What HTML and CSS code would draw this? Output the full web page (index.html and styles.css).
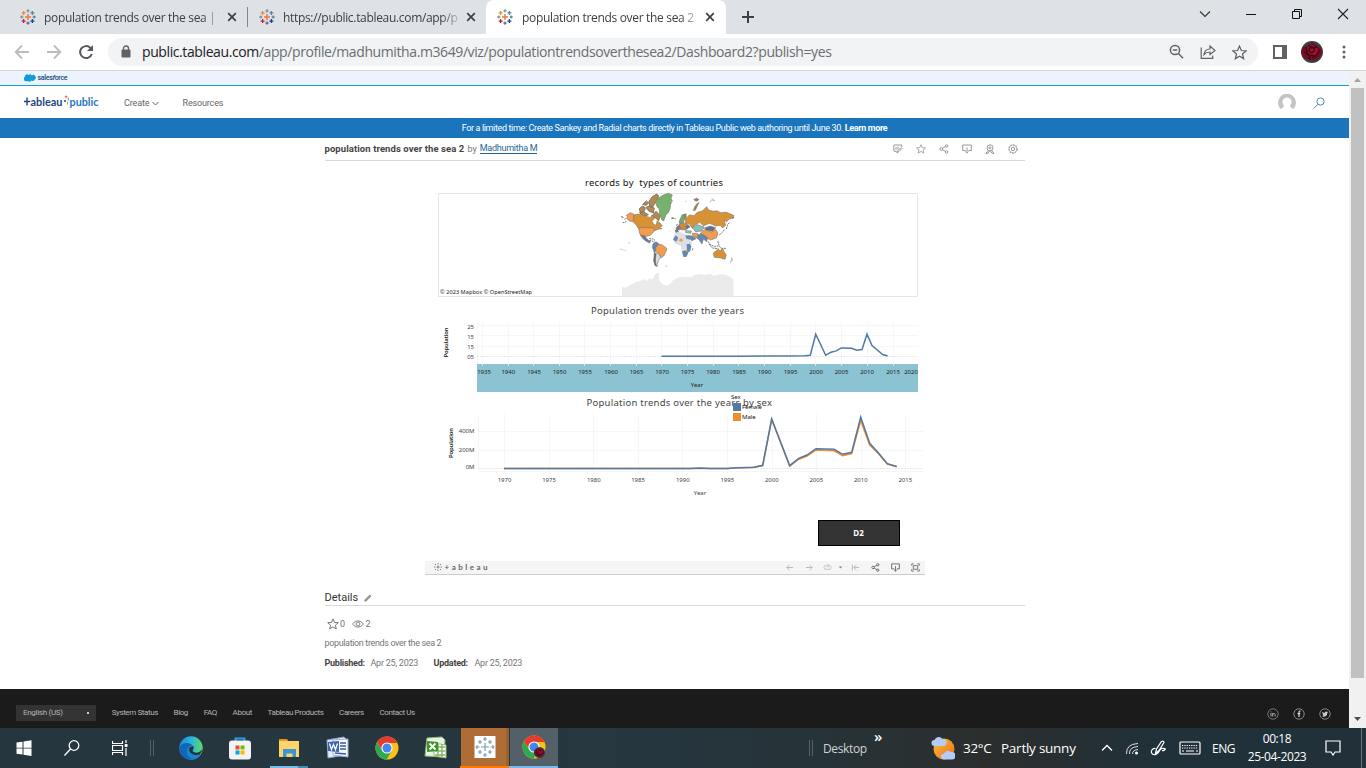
FILE: index.html
```html
<!DOCTYPE html>
<html lang="en">
<head>
<meta charset="utf-8">
<title>population trends over the sea 2</title>
<link rel="stylesheet" href="styles.css">
</head>
<body>
<svg class="defs" width="0" height="0">
  <symbol id="spark" viewBox="0 0 16 16">
    <g fill="none" stroke-width="1.3">
      <path d="M8 5v6M5 8h6" stroke="#eb7b3a" stroke-width="1.5"/>
      <path d="M8 .3v3.2M6.4 1.9h3.2" stroke="#7199a6"/>
      <path d="M8 12.500v3.200M6.400 14.100h3.200" stroke="#5c6692"/>
      <path d="M1.800 6.500v3M.3 8h3" stroke="#7199a6"/>
      <path d="M14.200 6.500v3M12.700 8h3" stroke="#59879b"/>
      <path d="M3.600 1.900v4M1.600 3.900h4" stroke="#e8912c"/>
      <path d="M12.400 1.900v4M10.400 3.900h4" stroke="#5b879b"/>
      <path d="M3.600 10.100v4M1.600 12.100h4" stroke="#c72037"/>
      <path d="M12.400 10.100v4M10.400 12.100h4" stroke="#1f447e"/>
    </g>
  </symbol>
  <symbol id="close" viewBox="0 0 10 10"><path d="M1.200 1.200l7.600 7.600M8.800 1.200l-7.600 7.600" fill="none" stroke="#3c4043" stroke-width="1.700"/></symbol>
  <symbol id="share" viewBox="0 0 10 10"><g fill="none" stroke="currentColor"><circle cx="2.300" cy="5" r="1.400"/><circle cx="7.600" cy="2" r="1.300"/><circle cx="7.600" cy="8" r="1.300"/><path d="M3.500 4.300l3-1.700M3.500 5.700l3 1.700"/></g></symbol>
  <symbol id="download" viewBox="0 0 10 10"><path d="M3.500 6.500H.7V1h8.600v5.500H6.500M5 3.500v5.600M3.400 7.500L5 9.100l1.600-1.600" fill="none" stroke="currentColor"/></symbol>
  <symbol id="star" viewBox="0 0 12 12"><path d="M6 .9l1.500 3.500 3.800.3-2.900 2.500.9 3.700L6 8.900l-3.300 2 .9-3.700L.7 4.700l3.800-.3z" fill="none" stroke="currentColor"/></symbol>
  <symbol id="chrome" viewBox="0 0 24 24">
    <circle cx="12" cy="12" r="11.500" fill="#fbc116"/>
    <path d="M2 6.300A11.500 11.500 0 0 1 22 6.300L22 7H12L7 14z" fill="#e33b2e"/>
    <path d="M2 6.300A11.500 11.500 0 0 0 11.500 23.500L17 14.500H7z" fill="#2da94f"/>
    <circle cx="12" cy="12" r="5.600" fill="#fff"/><circle cx="12" cy="12" r="4.500" fill="#4487ee"/>
  </symbol>
  <symbol id="rose" viewBox="0 0 22 22">
    <circle cx="11" cy="11" r="11" fill="#344247"/>
    <path d="M2 6l5-1 4-4 4 3 5 3 1 6-4 5-4 2-5-1-5-2-3-6z" fill="#780d21"/>
    <path d="M8 4l6 1 3 4-3 5-6-1-2-5z" fill="#a01430"/>
    <path d="M8 8c2-4 7-1 5 2s-6 1-5-2M3 11l5 3 1 5M19 9l-4 6-4 2M5 6l1 6M7 4l4 3 5-1M8 14l6 1" fill="none" stroke="#360914" stroke-width="1.300"/>
  </symbol>
</svg>

<div class="tabstrip">
  <div class="tab tab-one"><svg class="i16"><use href="#spark"/></svg><span class="tab-title">population trends over the sea | T</span><svg class="x"><use href="#close"/></svg></div>
  <div class="tab tab-two"><svg class="i16"><use href="#spark"/></svg><span class="tab-title tab-url">https://public.tableau.com/app/p</span><svg class="x"><use href="#close"/></svg></div>
  <div class="tab active"><svg class="i16"><use href="#spark"/></svg><span class="tab-title">population trends over the sea 2</span><svg class="x"><use href="#close"/></svg></div>
  <svg class="newtab" viewBox="0 0 14 14"><path d="M7 1v12M1 7h12" stroke="#3c4043" stroke-width="2"/></svg>
  <div class="winbtns">
    <svg viewBox="0 0 12 12"><path d="M1 3.500l5 5 5-5" fill="none" stroke="#333" stroke-width="1.100"/></svg>
    <svg viewBox="0 0 12 12"><path d="M1 6.500h10" stroke="#111"/></svg>
    <svg viewBox="0 0 12 12"><path d="M1.500 3.500h7v7h-7zM3.500 3.500v-2h7v7h-2" fill="none" stroke="#111"/></svg>
    <svg viewBox="0 0 12 12"><path d="M1 1l10 10M11 1L1 11" stroke="#222" stroke-width="1.100"/></svg>
  </div>
</div>
<div class="toolbar">
  <svg class="nav" viewBox="0 0 16 16"><path d="M15 8H2M8 1.500L1.700 8 8 14.500" fill="none" stroke="#babcbe" stroke-width="1.800"/></svg>
  <svg class="nav" viewBox="0 0 16 16"><path d="M1 8h13M8 1.500L14.300 8 8 14.500" fill="none" stroke="#babcbe" stroke-width="1.800"/></svg>
  <svg class="nav" viewBox="0 0 16 16"><path d="M13.800 10A6 6 0 1 1 12.200 3.700L14 5.500" fill="none" stroke="#55595d" stroke-width="2"/><path d="M15 1v6H9z" fill="#55595d"/></svg>
  <div class="omnibox">
    <svg width="10" height="14" viewBox="0 0 10 14"><path d="M2.500 6V3.500a2.500 2.500 0 0 1 5 0V6" fill="none" stroke="#5f6368" stroke-width="1.400"/><rect x="0.500" y="4.500" width="9" height="8" rx="1" fill="#5f6368"/></svg>
    <span class="url"><b>public.tableau.com</b>/app/profile/madhumitha.m3649/viz/populationtrendsoverthesea2/Dashboard2?publish=yes</span>
    <svg class="ob" viewBox="0 0 16 16"><g fill="none" stroke="#5f6368" stroke-width="1.500"><circle cx="7" cy="6" r="4.600"/><path d="M10.400 9.500l4.600 4.700M4.800 6h4.400"/></g></svg>
    <svg class="ob" viewBox="0 0 16 16"><g fill="none" stroke="#5f6368" stroke-width="1.200"><path d="M1.200 3.500V14.400h11.500v-3"/><path d="M4 10.500C4.500 7 7 5 10 5V2l5 4.500-5 4V8C7.500 8 5.500 8.700 4 10.500z"/></g></svg>
    <svg class="ob star"><use href="#star"/></svg>
  </div>
  <svg class="panel" viewBox="0 0 14 14"><rect x="1" y="1" width="12" height="12" fill="#fff" stroke="#5f6368" stroke-width="2"/><path d="M9 0h5v14H9z" fill="#5f6368"/></svg>
  <svg class="avatar"><use href="#rose"/></svg>
  <svg class="dots" viewBox="0 0 4 14"><g fill="#5f6368"><circle cx="2" cy="2" r="1.500"/><circle cx="2" cy="7" r="1.500"/><circle cx="2" cy="12" r="1.500"/></g></svg>
</div>

<div class="viewport">
<div class="page">
  <div class="sf-bar"><svg width="12" height="8" viewBox="0 0 12 8"><path d="M2.500 7.200A2.300 2.300 0 0 1 .8 3 2.300 2.300 0 0 1 4.500.9a2.300 2.300 0 0 1 3.300.5 2.300 2.300 0 0 1 2.800 4.300 2.500 2.500 0 0 1-3.400.7A2 2 0 0 1 4 7.300z" fill="#109cdb"/></svg><span>sales<i>f</i>orce</span></div>
  <div class="site-head">
    <svg class="brand" viewBox="24 92 76 20">
      <path d="M24 101.500h6.200M27 97.500v8" stroke="#1f457e" stroke-width="1.400"/>
      <text x="30.500" y="105.500" textLength="32" lengthAdjust="spacingAndGlyphs" fill="#1f457e">ableau</text>
      <text x="69.500" y="105.500" textLength="29" lengthAdjust="spacingAndGlyphs" fill="#2776bd">public</text>
      <path d="M66 95.500v2.500M64.800 96.700h2.500" stroke="#e45b5b"/><path d="M68.300 97.500v3" stroke="#5b9ac4"/><path d="M65 100v2M64 101h2" stroke="#1f457e"/><path d="M67.500 102v2.500" stroke="#eb912c"/>
    </svg>
    <span class="create">Create <svg width="7" height="5" viewBox="0 0 7 5"><path d="M.5 1l3 3 3-3" fill="none" stroke="#666"/></svg></span>
    <span class="resources">Resources</span>
    <svg class="user" viewBox="0 0 18 18"><path d="M2.500 15A9 9 0 1 1 15.500 15L12.300 13V11a4.500 4.500 0 1 0-6.600 0v2z" fill="#c4c4c4"/></svg>
    <svg class="find" viewBox="0 0 12 12"><g fill="none" stroke="#5a84bb"><circle cx="7.500" cy="4.500" r="3.600"/><path d="M5 7.200L.8 11.400"/></g></svg>
  </div>
  <div class="promo"><span>For a limited time: Create Sankey and Radial charts directly in Tableau Public web authoring until June 30. <b>Learn more</b></span></div>

  <div class="content">
    <div class="viz-head">
      <b class="viz-name">population trends over the sea 2</b><span class="by">by</span><a class="author">Madhumitha M</a>
      <div class="actions">
        <svg viewBox="0 0 10 10"><path d="M4 8L.8 7V1h8v2M3 3v3M5 2.500v3M4 9l1-2.500 3-3 1 1-3 3z" fill="none" stroke="currentColor"/></svg>
        <svg><use href="#star"/></svg>
        <svg><use href="#share"/></svg>
        <svg><use href="#download"/></svg>
        <svg viewBox="0 0 10 10"><g fill="none" stroke="currentColor"><circle cx="5" cy="3.800" r="3"/><circle cx="5" cy="3.800" r="1"/><path d="M3 6.500L1 9.500l2-.3L4.500 7M7 6.500l2 3-2-.3L5.500 7"/></g></svg>
        <svg viewBox="0 0 10 10"><g fill="none" stroke="currentColor"><circle cx="5" cy="5" r="4" stroke-width="1.300" stroke-dasharray="2 .6"/><circle cx="5" cy="5" r="1.700"/></g></svg>
      </div>
    </div>

    <div class="dashboard">
      <svg class="map" width="500" height="137" viewBox="425 161 500 137">
        <text x="585" y="186" class="title" textLength="138" xml:space="preserve">records by  types of countries</text>
        <rect x="438.500" y="193.500" width="479" height="103" fill="#fff" stroke="#e6e6e6"/>
        <g transform="translate(610 190) scale(.33333)">
          <path d="M36 319V291L48 293 62 284 78 275 90 274 100 267 110 272 118 266 128 268 134 255 141 248 147 249 147 270 157 282 168 287 180 283 190 270 208 262 225 260 245 261 252 255 270 252 285 255 300 251 312 257 326 254 342 253 358 259 370 268 371 319z" fill="#ebebeb"/>
          <g stroke="#7b756c" stroke-width="1.800">
            <path d="M88 56l10-8 8 5-3 11-12 3zM98 43l11-10 7 6-8 7zM108 52l14-5 11 8-3 14-14-6zM117 34l10-14 13-8 6 6-6 14-13 20-8-4zM126 78l12-14 12 12-4 16-9-8zM89 68l12-2 14 8-14 6z" fill="#b58b4b" stroke-width="3"/>
            <path d="M138 41l8-17 14-9 15-5 12 5-4 10 4 8-5 9-2 14-4 11-8 7-7 19-6-4-6-18-1-14-7-7z" fill="#76b16d"/>
            <path d="M70 75l18-3 12 4 12 4 9 3 5-8 8 9-8 10 5 9 8 3 2-14 9 7 7 9-9 4 8 4-12 2-11 4H90L80 107 70 95z" fill="#d89236"/>
            <path d="M49 76l12-8 10 4v23l-13-2-9-9 4-3z" fill="#f39c50"/>
            <path d="M88 113h39l7 4-4 10-9 9-7 1-8 3-15-5-4-12z" fill="#f39c50"/>
            <path d="M91 135l14 3 4 7 8 7 6-2-4 9-12-6-8-7z" fill="#68758b"/>
            <path d="M129 162l9-7 9 7-5 10-4 11-5 4-6-15z" fill="#598ab8"/>
            <path d="M138 171l9-8 10 2 14 11-3 9-7 13-9 6-6-14-10-7z" fill="#f39c50"/>
            <path d="M137 190l8-1 7 13-6 8-6 18-5-5z" fill="#d9dee2"/>
            <path d="M133 186l5 5-2 19 2 14 5 5-8-2-4-14z" fill="#5f6970"/>
            <path d="M208 93l8-18 12-4 1 10-7 9-2 9-7 3-5-2z" fill="#6daa79"/>
            <path d="M222 73l7 12 9-10 14 2 10-10 15-4 13-13 6 10 14 4 10-2 12 6 17-1 22 9v8l-12 2-9 9-8-5 5 15-9 9-7-8-14 2-18-8-18 7-12-10-15 9-7 9-9-12-11-4z" fill="#d89236"/>
            <path d="M250 62l4-11 6-9 7-5-4 9-7 15zM251 29l9-5 7 5-8 5z" fill="#9e8356"/>
            <path d="M247 112l15-8 21 7-7 12-20 2z" fill="#85bfc0"/>
            <path d="M284 114l16-6 17 5-9 11-20-3z" fill="#60738c"/>
            <path d="M270 131l14-12 21 7 12-8 7 12-5 14-17 6-22-11z" fill="#f39c50"/>
            <path d="M263 134l14-2 16 11-3 12-10-8-4 15-9-13-8-6z" fill="#5f88b3"/>
            <path d="M246 130h16l2 14-14-4z" fill="#f39c50"/>
            <path d="M229 136l17 2 12 8-12 6-12-10z" fill="#5f88b3"/>
            <path d="M207 103l11-5 12 3 8 9-10 10-15-1z" fill="#cf8a42"/>
            <path d="M200 111l7-5 5 8-7 7-7-2zM195 121h8l3 6h-9zM226 110l8-5 6 6-9 5z" fill="#5a7ba4"/>
            <path d="M206 112l7 2-3 6-6-2z" fill="#f0653d"/>
            <path d="M227 122l17 1-2 7-15-2z" fill="#8cc3c0"/>
            <path d="M310 189l15-12 5 5 8-7 4 10 7 10-4 13-13-4-19-2z" fill="#d89236"/>
          </g>
          <path d="M195 130l15-5 24 12 13 22-10 11-1 14-7 16h-8l-7-18-1-15-18-6-7-14z" fill="#dce0e5"/>
          <g fill="#6289b2"><path d="M189 149l8-13 8 7-6 12zM226 136l12 2 2 11-11-3zM230 163l10-2 4 9-4 15-9-1zM216 184l11-3 9 4-6 15-10 1z"/></g>
          <path d="M205 151l9-6 5 5-4 6zM222 180h10v6z" fill="#f39c50"/>
          <g fill="none" stroke="#777" stroke-width="3">
            <path d="M33 80l7 1-4 5M43 88l4-2M38 98l6-1 5-3M118 146l12 1 5 4M126 153l8 4M186 84l6 1 5 2" stroke-dasharray="5 2"/>
            <path d="M202 102l-3 7M247 181l2-8M294 155l8 10 12 4 12-1 8 7 14 0M297 162l10 12 18 2M324 153l1 10 5 4M328 135l10-9 6-8M349 117l4-14 7-6M361 216l6-5-3-9M371 81l-3 5" stroke-dasharray="6 2"/>
            <path d="M57 156l1 5M172 228l-6 1M31 177l7 3M300 38l4-8 10 1M305 24l10 10" stroke="#a19a89" stroke-width="1.800"/>
          </g>
          <path d="M182 84l7-2 4 3-7 3z" fill="#67a85c"/>
          <path d="M178 123l3 3M181 33l6 3M224 36l7-3M40 180l9 3" stroke="#ccc" stroke-width="2"/>
        </g>
        <text x="440" y="294" class="credit" textLength="92">© 2023 Mapbox  © OpenStreetMap</text>
      </svg>

      <svg class="chart" width="500" height="94" viewBox="425 298 500 94">
        <text x="591" y="314" class="title" textLength="153">Population trends over the years</text>
        <text class="axis-name" transform="translate(448 357.500) rotate(-90)" textLength="30">Population</text>
        <g class="tick end"><text x="474" y="329">25</text><text x="474" y="338.500">15</text><text x="474" y="348.500">15</text><text x="474" y="359">05</text></g>
        <path class="grid" d="M477 325.500h441M477 335.500h441M477 346.500h441M477.500 322v42M482.500 322v42M508.500 322v42M533.500 322v42M559.500 322v42M584.500 322v42M610.500 322v42M636.500 322v42M661.500 322v42M687.500 322v42M713.500 322v42M738.500 322v42M764.500 322v42M790.500 322v42M815.500 322v42M841.500 322v42M867.500 322v42M893.500 322v42"/>
        <path class="zero" d="M477 356.500h441"/>
        <path class="line" d="M661.500 356.200H738l36-.2 14 .1 17-.4 5.300-.5 5.400-21 10 21 5.300-3 5.300-1.300 5-3 10.400.3 5 2 5.300-.7 5-15.300 5 11.300 10.700 9 5 1.500"/>
        <rect x="477" y="364" width="441" height="28" fill="#8cc3d2"/>
        <path d="M482.500 364v2M508.500 364v2M533.500 364v2M559.500 364v2M584.500 364v2M610.500 364v2M636.500 364v2M661.500 364v2M687.500 364v2M713.500 364v2M738.500 364v2M764.500 364v2M790.500 364v2M815.500 364v2M841.500 364v2M867.500 364v2M893.500 364v2" stroke="#d8eaf0"/>
        <g class="tick band"><text x="484" y="374">1935</text><text x="508.300" y="374">1940</text><text x="534" y="374">1945</text><text x="559.500" y="374">1950</text><text x="585" y="374">1955</text><text x="611" y="374">1960</text><text x="636.500" y="374">1965</text><text x="662" y="374">1970</text><text x="687.500" y="374">1975</text><text x="713" y="374">1980</text><text x="739" y="374">1985</text><text x="764.500" y="374">1990</text><text x="790.500" y="374">1995</text><text x="816" y="374">2000</text><text x="841.500" y="374">2005</text><text x="867" y="374">2010</text><text x="893" y="374">2015</text><text x="911" y="374">2020</text><text x="697" y="387">Year</text></g>
      </svg>

      <svg class="chart" width="500" height="114" viewBox="425 392 500 114">
        <text x="586.500" y="406" class="title" textLength="185.500">Population trends over the years by sex</text>
        <text class="axis-name" transform="translate(453 458) rotate(-90)" textLength="30">Population</text>
        <g class="tick end"><text x="474.500" y="433.200">400M</text><text x="474.500" y="452.200">200M</text><text x="474.500" y="469.200">0M</text></g>
        <path class="grid" d="M478 431.500h445M478 450.500h445M478 471.500h445M478.500 414v57M504.500 414v60M549.500 414v60M593.500 414v60M638.500 414v60M682.500 414v60M727.500 414v60M772.500 414v60M816.500 414v60M861.500 414v60M905.500 414v60"/>
        <path class="zero" d="M478 468.500h445"/>
        <path class="line male" d="M504 468.600H727.500L737.500 467.800 752.500 467.400 762.700 465.500 771.700 419.500 789.700 466 798.700 459.200 807 456 816 450 834 450.800 842.700 455.600 851.700 453.600 860.700 420.500 869.700 445 878.300 453.500 887.300 464 896.700 466.700"/>
        <path class="line" d="M504 468.500H690L700 468.100 710 468.500H727.500L737.500 467.700 754.500 467.200 762.700 465.300 771.700 419 789.700 465.700 798.700 458.300 807 455 816 448.700 834 449.300 842.700 454.300 851.700 452.300 860.700 417 869.700 443.300 878.300 452.700 887.300 463.700 896.700 466.500"/>
        <g class="tick"><text x="504.500" y="482">1970</text><text x="549" y="482">1975</text><text x="593.800" y="482">1980</text><text x="638" y="482">1985</text><text x="682.800" y="482">1990</text><text x="727.300" y="482">1995</text><text x="771.800" y="482">2000</text><text x="816.300" y="482">2005</text><text x="860.800" y="482">2010</text><text x="905.300" y="482">2015</text><text x="700" y="495">Year</text></g>
        <g class="legend"><text x="731" y="399">Sex</text><text x="742" y="409.300" textLength="20">Female</text><text x="742" y="419.200">Male</text></g>
        <rect x="733" y="403" width="8" height="8" fill="#4e79a7"/><rect x="733" y="413" width="8" height="8" fill="#f28e2b"/>
      </svg>
      <div class="d2">D2</div>
      <div class="vizbar">
        <svg class="vizmark" viewBox="0 0 8 8"><g stroke="#666" stroke-width=".8"><path d="M4 2.500v3M2.500 4h3M4 0v1.500M4 6.500V8M0 4h1.500M6.500 4H8M1 1l1 1M6 6l1 1M1 7l1-1M6 2l1-1"/></g></svg>
        <span class="vizword">+ableau</span>
        <svg class="dim b1" viewBox="0 0 10 10"><path d="M9 5H2M5 2L2 5l3 3" fill="none" stroke="currentColor"/></svg>
        <svg class="dim" viewBox="0 0 10 10"><path d="M1 5h7M5 2l3 3-3 3" fill="none" stroke="currentColor"/></svg>
        <svg class="dim b3" viewBox="0 0 10 10"><path d="M7 3H2Q0 5 2 7h6q2-2 0-4M5 1l2 2-2 2" fill="none" stroke="currentColor" stroke-width=".8"/></svg>
        <svg class="dim b4" viewBox="0 0 10 10"><path d="M3 4h4L5 6z" fill="#888"/></svg>
        <svg class="dim b5" viewBox="0 0 10 10"><path d="M1.500 1.500v7M9 5H3M6 2L3 5l3 3" fill="none" stroke="currentColor"/></svg>
        <svg><use href="#share"/></svg>
        <svg><use href="#download"/></svg>
        <svg viewBox="0 0 10 10"><path d="M.8 3V1H3M7 1h2.200v2M9.200 7v2H7M3 9H.8V7M2.500 3h5v4h-5z" fill="none" stroke="currentColor"/></svg>
      </div>
    </div>

    <div class="details-head">Details <svg viewBox="0 0 8 8"><path d="M.8 7.200L1.200 5.600 5.800 1l1.200 1.200-4.600 4.600z" fill="#aaa" stroke="#666" stroke-width=".7"/></svg></div>
    <div class="stats"><svg class="s1"><use href="#star"/></svg><span>0</span><svg class="s2" viewBox="0 0 12 8"><g fill="none" stroke="#777" stroke-width=".9"><path d="M.5 4Q6-2.500 11.500 4 6 10.500.5 4z"/><circle cx="6" cy="4" r="1.900"/></g></svg><span>2</span></div>
    <div class="desc">population trends over the sea 2</div>
    <div class="dates"><b class="pub">Published:</b><span class="day">Apr 25, 2023</span><b class="upd">Updated:</b><span class="day">Apr 25, 2023</span></div>
  </div>

  <div class="footer">
    <div class="lang"><span>English (US)</span><i></i></div>
    <span>System Status</span><span>Blog</span><span>FAQ</span><span>About</span><span>Tableau Products</span><span>Careers</span><span>Contact Us</span>
    <div class="social">
      <svg viewBox="0 0 12 12"><circle cx="6" cy="6" r="5.200" fill="none" stroke="#777"/><path d="M4 5v3.500M4 3.500v.8M5.700 8.500V5M5.700 6.300q1.600-2 2.500 0v2.200" stroke="#aaa" fill="none"/></svg>
      <svg viewBox="0 0 12 12"><circle cx="6" cy="6" r="5.200" fill="none" stroke="#888"/><path d="M7.600 3Q6 2.800 6 4.500V9M4.600 5.700h2.700" stroke="#ddd" stroke-width="1.200" fill="none"/></svg>
      <svg viewBox="0 0 12 12"><circle cx="6" cy="6" r="5.200" fill="none" stroke="#888"/><path d="M3 4l2.700 1q0-1.500 1.300-1.500l2 .5-.7 1Q8 9 4.500 8.800L3 8l1.300-.4z" fill="#ccc"/></svg>
    </div>
  </div>
</div>
<div class="scrollbar"><svg viewBox="0 0 7 4"><path d="M0 4L3.500 0 7 4z" fill="#a3a3a3"/></svg><div class="thumb"></div><svg viewBox="0 0 7 4"><path d="M0 0h7L3.500 4z" fill="#505050"/></svg></div>
</div>

<div class="taskbar">
  <div class="sys"><svg viewBox="0 0 16 16"><path d="M.5 2.500l6-.8v6h-6zM7.500 1.500l8-1.200v7.400h-8zM.5 8.600h6v6l-6-.9zM7.500 8.600h8v7.300l-8-1.200z" fill="#fff"/></svg></div>
  <div class="sys"><svg viewBox="0 0 16 16"><g fill="none" stroke="#fff" stroke-width="1.300"><circle cx="10" cy="5.500" r="4.800"/><path d="M6.500 9L.5 15.500"/></g></svg></div>
  <div class="sys"><svg viewBox="0 0 16 16"><path d="M.5 1v2.500h10V1M.5 15v-2.500h10V15M.5 5.500h10v5H.5zM14 0v3M14 8v8" fill="none" stroke="#fff" stroke-width="1.200"/><path d="M12.700 4h2.800v3h-2.800z" fill="#fff"/></svg></div>
  <div class="grip"></div>
  <div class="app"><svg viewBox="0 0 24 24"><defs><linearGradient id="eg" x1="0" x2="1"><stop stop-color="#168bd1"/><stop offset=".5" stop-color="#29b4e2"/><stop offset="1" stop-color="#5bdb62"/></linearGradient></defs><circle cx="12" cy="12" r="11.700" fill="url(#eg)"/><path d="M.5 13C1 6 11 5 14 10c-6-2-8 8 7 8-3 5-9 7-14 4.500S0 17 .5 13z" fill="#1266b9"/><path d="M8.500 12C6 17 10 23 15 23c3-.5 5-2 7-5-5 2-12 0-13.500-6z" fill="#1687d3"/><path d="M14 10c2 2-1 4 0 5.500 2 2 7 1.500 9.200-2.500-.5 3-1.200 4-2.500 5.500-9 2-12-4-10-7.500z" fill="#26343c"/></svg></div>
  <div class="app"><svg viewBox="0 0 24 24"><path d="M7.500 5V2.500h9V5" fill="none" stroke="#27a3e4" stroke-width="2"/><rect x="1" y="4.500" width="22" height="19" rx="3" fill="#f3f3f3"/><path d="M7.500 9.500h4v4h-4z" fill="#ef4f21"/><path d="M12.500 9.500h4v4h-4z" fill="#7cba00"/><path d="M7.500 14.500h4v4h-4z" fill="#02a4ef"/><path d="M12.500 14.500h4v4h-4z" fill="#feb800"/></svg></div>
  <div class="app explorer"><svg viewBox="0 0 24 24"><path d="M2 3h8l2 3H2z" fill="#dc9b20"/><path d="M2 5h20v16H2z" fill="#fbd567"/><path d="M6 21v-8h13v8h-3.500v-3.500h-6V21z" fill="#3a94d8"/></svg></div>
  <div class="app"><svg viewBox="0 0 24 24"><path d="M1 4l17-3 3 3-2 15L2 22z" fill="#e9edf6" stroke="#8d9ebf"/><path d="M7 4l15-1v18l-15-2z" fill="#f7f8fb" stroke="#9eafcf"/><path d="M2 6l11-1v11L2 15z" fill="#3c62b0"/><path d="M3.500 7.500l2 6 2-5 2 5 2-6" fill="none" stroke="#fff" stroke-width="1.300"/><path d="M14 7h6M14 10h6M14 13h6M9 17l11 1" stroke="#315ba9" stroke-width="1.500"/></svg></div>
  <div class="app"><svg><use href="#chrome"/></svg></div>
  <div class="app"><svg viewBox="0 0 24 24"><path d="M3 2l15-1 3 3-1 17-19-1z" fill="#e9f4df" stroke="#91b67b"/><path d="M10 7l12 2v13l-12-2z" fill="#fff" stroke="#93bb7d"/><path d="M11 11h10M11 15h10M11 19h10M14 8v12M18 8v13" stroke="#83b663" stroke-width="1.400"/><path d="M3 5l11 1v9L3 16z" fill="#3c922b"/><path d="M5.500 7.500l6 6M11.500 7.500l-6 6" stroke="#fff" stroke-width="1.900"/></svg></div>
  <div class="app orange"><svg viewBox="0 0 24 24"><path d="M1.500 1h21v22h-21z" fill="#fff"/><g stroke="#7099af" stroke-width="1.100"><path d="M12 8v8M8 12h8M12 2v4M10 4h4M12 18v4M10 20h4M4 10v4M2.500 12h4M20 10v4M17.500 12h4M7 5v4M5 7h4M17 5v4M15 7h4M7 15v4M5 17h4M17 15v4M15 17h4"/></g></svg></div>
  <div class="app current"><svg viewBox="0 0 24 24"><use href="#chrome" width="24" height="24"/><use href="#rose" x="12" y="12" width="11" height="11"/></svg></div>
  <div class="tray">
    <div class="grip2"></div><span class="desk">Desktop</span><span class="more">»</span>
    <svg class="weather" viewBox="0 0 24 24"><defs><linearGradient id="wg" x1="0" y1="0" x2="1" y2="1"><stop stop-color="#f8bd37"/><stop offset="1" stop-color="#ef701b"/></linearGradient></defs><circle cx="13" cy="13" r="10.500" fill="url(#wg)"/><path d="M3.500 10a3 3 0 0 1 0-6 4.500 4.500 0 0 1 8-1 3.500 3.500 0 0 1 1 7zM13 23.500a3 3 0 0 1 0-6 4.500 4.500 0 0 1 7-1.500 3.800 3.800 0 0 1 1.500 7.500z" fill="#b3cdf8"/></svg>
    <span class="temp">32°C</span><span class="sky">Partly sunny</span>
    <svg class="up" viewBox="0 0 12 12"><path d="M1 8.500l5-5 5 5" fill="none" stroke="#fff" stroke-width="1.300"/></svg>
    <svg class="wifi" viewBox="0 0 14 14"><g fill="none" stroke="#ddd"><path d="M1.500 13Q1 3 13 2.500M4.500 13Q4 6 13 5.500M7.500 13q0-4 5.500-4.500"/></g><circle cx="11.500" cy="12" r="1.500" fill="#fff"/></svg>
    <svg class="pen" viewBox="0 0 16 16"><path d="M5.500 13.500L6.500 9l5-7.500q2-1 2.500 1l-5 8zM5.500 8.500C2 8 0 12 2.500 14s6-1 7.500-4 6-1 5.500-1-1 2.500-3.500 1.500" fill="none" stroke="#fff" stroke-width="1.200"/></svg>
    <svg class="kb" viewBox="0 0 22 14"><rect x="1" y="1" width="20" height="12" rx="1" fill="none" stroke="#fff" stroke-width="1.200"/><path d="M3 4.500h16M3 7h16" stroke="#fff" stroke-dasharray="1.300 1"/><path d="M3 10h2M7 10h8M17 10h2" stroke="#fff" stroke-width="1.200"/></svg>
    <span class="eng">ENG</span>
    <div class="clock"><span>00:18</span><span>25-04-2023</span></div>
    <svg class="note" viewBox="0 0 16 16"><path d="M1 1h14v11h-5L8 15l-2-3H1z" fill="none" stroke="#fff" stroke-width="1.200"/></svg>
    <div class="peek"></div>
  </div>
</div>
</body>
</html>
```
FILE: styles.css
```css
* { box-sizing: border-box; }
body { margin: 0; width: 1366px; height: 768px; overflow: hidden; display: flex; flex-direction: column; background: #fff; font-family: Roboto, "Liberation Sans", sans-serif; white-space: nowrap; }
svg { display: block; flex: none; }
.defs { position: absolute; }

.tabstrip { height: 34px; flex: none; background: #dee1e6; display: flex; font: 12px "Open Sans", sans-serif; color: #3c4043; }
.tab { display: flex; align-items: center; height: 34px; }
.tab-one { width: 248px; padding-left: 20px; background: linear-gradient(#85888c, #85888c) right 0 top 7px / 1px 20px no-repeat; }
.tab-two { width: 238px; padding-left: 11px; }
.tab.active { width: 240px; padding-left: 11px; background: #fff; border-radius: 8px 8px 0 0; }
.i16 { width: 16px; height: 16px; }
.tab-title { width: 175px; margin-left: 8px; overflow: hidden; letter-spacing: -0.32px; -webkit-mask-image: linear-gradient(90deg, #000 158px, transparent 180px); mask-image: linear-gradient(90deg, #000 158px, transparent 180px); }
.tab.active .tab-title { margin-left: 9px; }
.x { width: 10px; height: 10px; margin-left: 8px; }
.newtab { width: 14px; height: 14px; margin: 10px 0 0 15px; }
.winbtns { margin: 8px 17px 0 auto; display: flex; gap: 34px; }
.winbtns svg { width: 12px; height: 12px; }

.toolbar { height: 37px; flex: none; border-bottom: 1px solid #d4d6d9; display: flex; align-items: center; padding: 0 20px 0 14px; }
.nav { width: 16px; height: 16px; margin-right: 16px; }
.omnibox { width: 1150px; height: 28px; border-radius: 14px; background: #f1f3f4; display: flex; align-items: center; padding-left: 13px; margin-left: -2px; }
.url { font: 14px/18px "Open Sans", sans-serif; color: #6a6e72; margin: 0 auto 1px 11px; letter-spacing: -0.4px; }
.url b { font-weight: 400; color: #202124; }
.ob { width: 16px; height: 16px; margin-right: 16px; }
.ob.star { width: 15px; height: 15px; margin-right: 11px; color: #5f6368; }
.panel { width: 14px; height: 14px; margin-left: 15px; }
.avatar { width: 22px; height: 22px; margin-left: 14px; }
.dots { width: 4px; height: 14px; margin-left: auto; }

.viewport { height: 657px; flex: none; display: flex; }
.page { width: 1349px; display: flex; flex-direction: column; }
.sf-bar { height: 15px; flex: none; background: #ecf3fe; border-bottom: 1px solid #189bd5; display: flex; align-items: center; padding-left: 24px; font-size: 7px; font-weight: 500; color: #184a7a; }
.sf-bar span { margin-left: 1.500px; letter-spacing: -0.3px; }
.site-head { height: 32px; flex: none; display: flex; align-items: center; padding: 2px 24px 0; color: #666; font-size: 9px; letter-spacing: -0.15px; }
.brand { width: 76px; height: 20px; margin-bottom: 2px; font: bold 11px Lato, sans-serif; letter-spacing: 0; }
.create { margin-left: 24px; width: 58.500px; display: flex; align-items: center; gap: 3px; }
.user { width: 18px; height: 18px; margin-left: auto; }
.find { width: 12px; height: 12px; margin-left: 17px; }
.promo { height: 20px; flex: none; background: #1b75bc; color: #fff; font-size: 9px; line-height: 20px; text-align: center; letter-spacing: -0.36px; }

.content { width: 700px; margin: 0 auto; height: 551px; flex: none; display: flex; flex-direction: column; }
.viz-head { height: 23px; flex: none; border-bottom: 1px solid #d8d8d8; display: flex; align-items: center; font-size: 9px; color: #333; padding-bottom: 1px; }
.viz-name { font-size: 9.500px; letter-spacing: 0.08px; color: #444; }
.by { margin: 0 3px; color: #777; }
.author { color: #2a6496; border-bottom: 1px solid #1b6699; line-height: 10px; letter-spacing: -0.25px; }
.actions { display: flex; gap: 13px; margin: 1px 6.500px 0 auto; color: #999; }
.actions svg { width: 10px; height: 10px; }
.dashboard { width: 500px; margin-left: 100px; height: 414px; flex: none; display: flex; flex-direction: column; }
.title { font: 9.500px "Noto Sans", sans-serif; fill: #444; }
.map .title { fill: #111; }
.credit { font: 5.600px "Noto Sans", sans-serif; fill: #222; }
.axis-name { font: 600 6px "Noto Sans", sans-serif; fill: #222; }
.tick { font: 6px "Noto Sans", sans-serif; fill: #444; text-anchor: middle; }
.tick.end { text-anchor: end; }
.tick.band { fill: #222; }
.legend { font: 6px "Noto Sans", sans-serif; fill: #111; }
.grid { fill: none; stroke: #f6f6f6; }
.zero { stroke: #e8e8e8; stroke-dasharray: 2 1; }
.line { fill: none; stroke: #5079a8; stroke-width: 1.500; }
.line.male { stroke: #f28e2b; }
.d2 { width: 82px; height: 26px; margin: 14px 0 15px 393px; background: #333; border: 1px solid #000; color: #fff; font: bold 8px/24px "Noto Sans", sans-serif; text-align: center; flex: none; }
.vizbar { height: 14px; flex: none; background: #f5f5f5; border-bottom: 1px solid #ccc; display: flex; align-items: center; padding: 0 5px 1px 9px; color: #666; }
.vizbar svg { width: 9px; height: 9px; margin-left: 11px; }
.vizbar .vizmark { margin: 0; width: 8px; height: 8px; }
.vizword { font: bold 8px Lato, sans-serif; letter-spacing: 2.500px; margin: 0 auto 0 3px; }
.vizbar .dim { color: #b5b5b5; }
.vizbar .b3 { margin-left: 9px; }
.vizbar .b4 { margin-left: 4px; }
.vizbar .b5 { margin-left: 6px; }
.details-head { height: 31px; flex: none; border-bottom: 1px solid #d8d8d8; display: flex; align-items: flex-end; font-size: 11px; line-height: 15px; color: #333; }
.details-head svg { width: 8px; height: 8px; margin: 0 0 3px 6px; }
.stats { height: 15px; margin: 10px 0 0 2.500px; flex: none; display: flex; align-items: center; font-size: 9px; color: #777; }
.s1 { width: 12px; height: 12px; margin-right: 1px; }
.s2 { width: 12px; height: 8px; margin: 0 1.500px 0 7px; }
.desc { font-size: 9px; line-height: 12px; margin-top: 6px; color: #777; letter-spacing: -0.36px; }
.dates { display: flex; font-size: 9px; line-height: 12px; margin-top: 8px; color: #777; letter-spacing: -0.25px; }
.dates b { color: #444; }
.pub { width: 46px; }
.day { width: 48px; }
.upd { width: 41px; margin-left: 15px; }

.footer { flex: 1; background: #1b1b1b; display: flex; align-items: center; padding: 8px 18px 0 16px; font-size: 8px; color: #b5b5b5; gap: 15.700px; letter-spacing: -0.4px; }
.lang { width: 80px; height: 16px; background: #333; display: flex; align-items: center; justify-content: space-between; padding: 0 7px; letter-spacing: -0.3px; }
.lang i { width: 2px; height: 2px; background: #ccc; }
.social { display: flex; gap: 14px; margin: 2px 0 0 auto; }
.social svg { width: 12px; height: 12px; }
.scrollbar { width: 17px; background: #f1f1f1; display: flex; flex-direction: column; align-items: center; }
.scrollbar svg { width: 7px; height: 4px; margin-top: 7px; }
.thumb { width: 13px; height: 590px; background: #c1c1c1; margin: 6px 0 32px; }

.taskbar { height: 40px; flex: none; background: linear-gradient(90deg, #25363e 0, #263740 45%, #263338 60%, #2c2e2e 72%, #203139 85%, #213039); display: flex; color: #fff; font: 12px "Open Sans", sans-serif; }
.sys { width: 48px; display: flex; align-items: center; justify-content: center; }
.sys svg { width: 16px; height: 16px; }
.grip { width: 22px; background: linear-gradient(#53636a, #53636a) 6px 12px / 1px 16px no-repeat, linear-gradient(#53636a, #53636a) 9px 12px / 1px 16px no-repeat; }
.app { width: 49px; display: flex; align-items: center; justify-content: center; }
.app svg { width: 24px; height: 24px; }
.explorer { background: linear-gradient(90deg, #76b9ed 28px, #4f86ae 28px) 6px 38px / 38px 2px no-repeat; }
.orange { background: #af6c35; border: solid #ff7900; border-width: 0 0 2px; box-shadow: inset 1px 0 #25363e, inset -3px 0 #9b602f; }
.current { background: #536067; border-bottom: 2px solid #76b9ed; box-shadow: inset 1px 0 #25363e; }
.tray { margin-left: auto; width: 557px; display: flex; align-items: center; }
.grip2 { width: 4px; height: 16px; border: solid #53636a; border-width: 0 1px; }
.desk { width: 51px; margin-left: 10px; color: #d0d3d5; letter-spacing: -0.35px; }
.more { width: 14px; font-size: 15px; font-weight: 600; margin-bottom: 24px; }
.weather { width: 24px; height: 24px; margin-left: 43px; }
.temp { font-size: 13.500px; width: 38px; margin-left: 8px; letter-spacing: -0.3px; }
.sky { font-size: 13.500px; width: 76px; letter-spacing: -0.25px; }
.up { width: 12px; height: 12px; margin-left: 24px; }
.wifi { width: 14px; height: 14px; margin-left: 12px; }
.pen { width: 16px; height: 16px; margin-left: 11px; }
.kb { width: 22px; height: 14px; margin-left: 13px; }
.eng { width: 24px; margin-left: 11px; letter-spacing: -0.5px; }
.clock { width: 60px; margin-left: 11px; display: flex; flex-direction: column; align-items: center; line-height: 18px; letter-spacing: -0.4px; }
.note { width: 16px; height: 16px; margin: 0 0 0 18px; }
.peek { width: 1px; height: 40px; background: #65727a; margin-left: auto; margin-right: 4px; }
```
